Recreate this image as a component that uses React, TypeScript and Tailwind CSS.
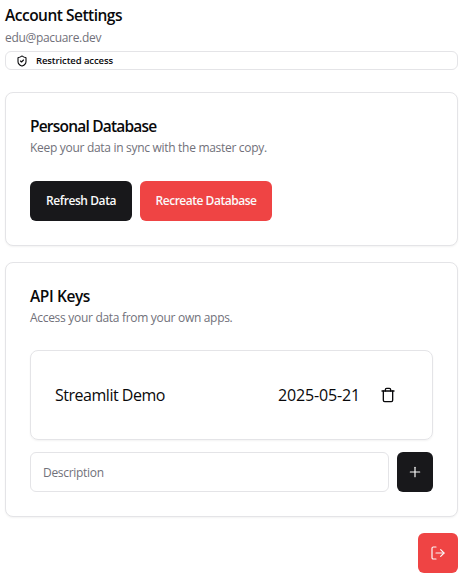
import { LogOut, Plus, ShieldCheck, Trash } from "lucide-react";
import type { ReactNode } from "react";

function Card({ heading, description, children }: { heading: ReactNode; description: string; children: ReactNode }) {
  return (
    <section className="rounded-lg border border-[#e4e4e7] bg-white px-6 pb-6 pt-[22px] shadow-xs">
      {heading}
      <p className="mt-[3px] h-5 whitespace-nowrap text-[12px] leading-5 tracking-[-0.3px] text-[#71717a]">{description}</p>
      {children}
    </section>
  );
}

export default function App() {
  return (
    <main className="flex h-[588px] w-[472px] flex-col bg-white pl-[5px] pr-[14px] pt-1 font-['Open_Sans',sans-serif] text-[#09090b]">
      <h1 className="h-5 whitespace-nowrap text-[15.5px] font-semibold leading-[22px] tracking-[-0.5px]">Account Settings</h1>
      <p className="mt-[3px] h-5 whitespace-nowrap text-[12px] leading-[21px] tracking-[-0.32px] text-[#71717a]">edu@pacuare.dev</p>
      <div className="mt-1 flex h-[19px] items-center rounded-md border border-[#e4e4e7] pl-[10px] text-[9.5px] font-semibold">
        <ShieldCheck size={12} strokeWidth={2.2} />
        <span className="ml-2 whitespace-nowrap pt-px tracking-[-0.1px]">Restricted access</span>
      </div>

      <div className="mt-[22px] flex flex-col gap-4">
        <Card
          heading={<h2 className="h-5 whitespace-nowrap text-[15.5px] font-semibold leading-[22px] tracking-[-0.8px]">Personal Database</h2>}
          description="Keep your data in sync with the master copy."
        >
          <div className="mt-[23px] flex gap-2">
            <button className="h-10 w-[102px] whitespace-nowrap rounded-md bg-[#18181b] text-[12px] font-semibold tracking-[-0.42px] text-[#fafafa]">Refresh Data</button>
            <button className="h-10 w-[132px] whitespace-nowrap rounded-md bg-[#ef4444] text-[12px] font-semibold tracking-[-0.48px] text-[#fafafa]">Recreate Database</button>
          </div>
        </Card>

        <Card
          heading={<h2 className="h-5 whitespace-nowrap text-[15.5px] font-semibold leading-[22px] tracking-[-0.4px]">API Keys</h2>}
          description="Access your data from your own apps."
        >
          <div className="mt-[22px] flex h-[90px] items-center rounded-lg border border-[#e4e4e7] px-6 text-[16px] shadow-xs">
            <span className="grow whitespace-nowrap tracking-[-0.48px]">Streamlit Demo</span>
            <span className="whitespace-nowrap tracking-[-0.15px]">2025-05-21</span>
            <button aria-label="Delete key" className="ml-2 flex size-10 items-center justify-center">
              <Trash size={16} />
            </button>
          </div>
          <div className="mt-3 flex gap-2">
            <input
              placeholder="Description"
              className="h-10 min-w-0 grow rounded-md border border-[#e4e4e7] px-3 text-[12px] tracking-[-0.3px] placeholder:text-[#71717a]"
            />
            <button aria-label="Add key" className="flex h-10 w-9 items-center justify-center rounded-md bg-[#18181b] text-[#fafafa]">
              <Plus size={16} strokeWidth={1.8} />
            </button>
          </div>
        </Card>
      </div>

      <button aria-label="Log out" className="mt-4 flex size-10 items-center justify-center self-end rounded-md bg-[#ef4444] text-[#fafafa]">
        <LogOut size={16} strokeWidth={1.8} />
      </button>
    </main>
  );
}
